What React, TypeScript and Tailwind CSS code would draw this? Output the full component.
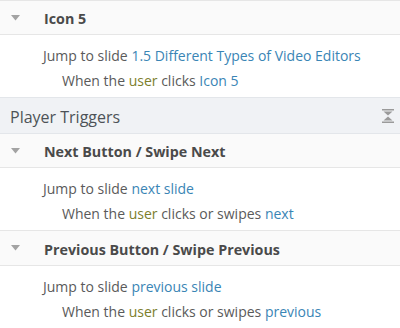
const font = { fontFamily: '"Open Sans", "Noto Sans", sans-serif' };

function Caret() {
  return (
    <svg width="9" height="6" viewBox="0 0 9 6" className="shrink-0">
      <path d="M0 0 H9 L4.5 5.5 Z" fill="#a3a3a3" />
    </svg>
  );
}

function CollapseIcon() {
  return (
    <svg width="12" height="14" viewBox="0 0 12 14">
      <rect x="0" y="0" width="12" height="1.5" fill="#9a9a9a" />
      <path d="M1.5 2.5 H10.5 L6 6.5 Z" fill="#9a9a9a" />
      <path d="M1.5 11.5 H10.5 L6 7.5 Z" fill="#9a9a9a" />
      <rect x="0" y="12.5" width="12" height="1.5" fill="#9a9a9a" />
    </svg>
  );
}

function Trigger({
  title,
  target,
  action,
  object,
  last,
}: {
  title: string;
  target: string;
  action: string;
  object: string;
  last?: boolean;
}) {
  return (
    <div>
      <div
        className={`flex items-center border-b border-[#e6e6e6] bg-[#fafafa] pl-[11px] ${
          last ? "h-[35px]" : "h-[34px]"
        }`}
      >
        <Caret />
        <span className="ml-6 pt-[3px] text-[14.3px] font-bold text-[#4a4a4a]">{title}</span>
      </div>
      <div className="h-[63px] border-b border-[#e6e6e6] bg-white pt-[8px] text-[14px] leading-[25px] text-[#5a5a5a]">
        <div className="pl-[43px]">
          Jump to slide <span className="text-[#3a85b5]">{target}</span>
        </div>
        <div className="pl-[62px]">
          When the <span className="text-[#7c7e2c]">user</span> {action}{" "}
          <span className="text-[#3a85b5]">{object}</span>
        </div>
      </div>
    </div>
  );
}

export default function App() {
  return (
    <div style={font} className="h-[328px] w-[400px] overflow-hidden border-t border-[#e6e6e6] bg-white">
      <Trigger
        title="Icon 5"
        target="1.5 Different Types of Video Editors"
        action="clicks"
        object="Icon 5"
      />
      <div className="-mt-px flex h-[37px] items-center justify-between border-y border-[#e3e6ea] bg-[#f0f2f5] pl-[10px] pr-[6px]">
        <span className="pt-[3px] text-[16px] font-medium text-[#4d5257]">Player Triggers</span>
        <CollapseIcon />
      </div>
      <Trigger
        title="Next Button / Swipe Next"
        target="next slide"
        action="clicks or swipes"
        object="next"
      />
      <Trigger
        title="Previous Button / Swipe Previous"
        target="previous slide"
        action="clicks or swipes"
        object="previous"
        last
      />
    </div>
  );
}
